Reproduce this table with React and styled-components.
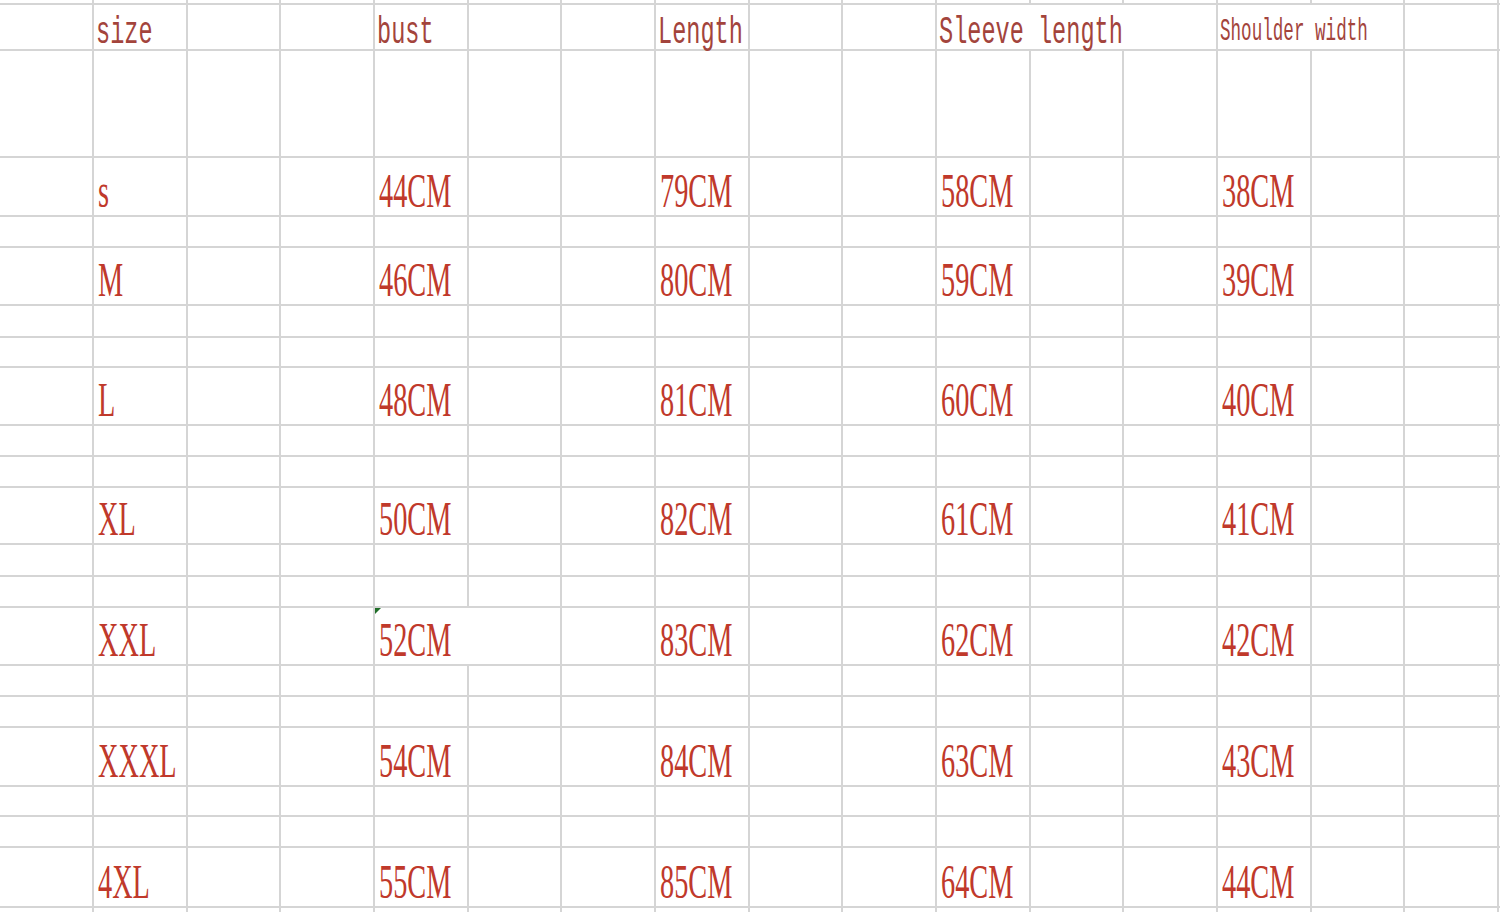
import React from 'react';
import styled, { createGlobalStyle } from 'styled-components';

const GlobalStyle = createGlobalStyle`
  html, body {
    margin: 0;
    padding: 0;
    background: #ffffff;
    overflow: hidden;
  }
`;

// column widths between the grid lines (lines are the 2px gaps)
const COLUMNS = '92px repeat(15, 91.67px) 1fr';
// row heights: a sliver on top, header, a tall empty row, then size rows with spacer rows
const ROW_HEIGHTS = [3, 44, 105, 57, 29, 56, 30, 28, 56, 29, 29, 55, 30, 29, 56, 29, 29, 57, 28, 29, 58, 4];
const COLS = 17;

const headers = { 1: 'size', 4: 'bust', 7: 'Length', 10: 'Sleeve length', 13: 'Shoulder width' };
const headerSpans = { 10: 3, 13: 2 };

const sizes = [
  ['s', '44CM', '79CM', '58CM', '38CM'],
  ['M', '46CM', '80CM', '59CM', '39CM'],
  ['L', '48CM', '81CM', '60CM', '40CM'],
  ['XL', '50CM', '82CM', '61CM', '41CM'],
  ['XXL', '52CM', '83CM', '62CM', '42CM'],
  ['XXXL', '54CM', '84CM', '63CM', '43CM'],
  ['4XL', '55CM', '85CM', '64CM', '44CM'],
];

// which grid row holds each size, and how many spacer rows follow it
const sizeRows = { 3: 0, 5: 1, 8: 2, 11: 3, 14: 4, 17: 5, 20: 6 };

const buildCells = (texts = {}, spans = {}) => {
  const cells = [];
  for (let c = 0; c < COLS; c++) {
    const span = spans[c] || 1;
    cells.push({ c, span, text: texts[c] });
    c += span - 1;
  }
  return cells;
};

const SizeChart = () => {
  const rows = ROW_HEIGHTS.map((_, r) => {
    if (r === 1) return { kind: 'header', cells: buildCells(headers, headerSpans) };
    if (sizeRows[r] !== undefined) {
      const [size, bust, length, sleeve, shoulder] = sizes[sizeRows[r]];
      const spans = size === 'XXL' ? { 4: 2 } : {};
      return {
        kind: 'data',
        flagged: size === 'XXL',
        cells: buildCells({ 1: size, 4: bust, 7: length, 10: sleeve, 13: shoulder }, spans),
      };
    }
    return { kind: 'empty', cells: buildCells() };
  });

  return (
    <Sheet>
      {rows.map((row, r) =>
        row.cells.map(({ c, span, text }) => {
          if (row.kind === 'header') {
            return (
              <HeaderCell key={`${r}-${c}`} $span={span}>
                {text && <HeaderText $small={c === 13}>{text}</HeaderText>}
              </HeaderCell>
            );
          }
          if (row.kind === 'data') {
            return (
              <DataCell key={`${r}-${c}`} $span={span}>
                {row.flagged && c === 4 && <ErrorMark />}
                {text && <Value>{text}</Value>}
              </DataCell>
            );
          }
          return <Cell key={`${r}-${c}`} />;
        })
      )}
    </Sheet>
  );
};

const App = () => (
  <>
    <GlobalStyle />
    <SizeChart />
  </>
);

export default App;

// Styled Components
const Sheet = styled.div`
  width: 1500px;
  height: 912px;
  display: grid;
  grid-template-columns: ${COLUMNS};
  grid-template-rows: ${ROW_HEIGHTS.map((h) => `${h}px`).join(' ')};
  gap: 2px;
  background: #d5d5d5;
  overflow: hidden;
`;

const Cell = styled.div`
  background: #ffffff;
  grid-column: span ${(p) => p.$span || 1};
  min-width: 0;
  position: relative;
`;

const HeaderCell = styled(Cell)`
  padding: 9px 0 0 2px;
  white-space: nowrap;
`;

const HeaderText = styled.span`
  display: inline-block;
  font-family: 'Liberation Mono', 'Courier New', monospace;
  font-size: ${(p) => (p.$small ? '32px' : '38px')};
  line-height: 1;
  color: #a3443c;
  transform: scaleX(${(p) => (p.$small ? 0.55 : 0.62)});
  transform-origin: left center;
  margin-top: ${(p) => (p.$small ? '2px' : '0')};
`;

const DataCell = styled(Cell)`
  display: flex;
  align-items: flex-end;
  padding-left: 4px;
  white-space: nowrap;
`;

const Value = styled.span`
  display: inline-block;
  font-family: 'Liberation Serif', 'Times New Roman', serif;
  font-size: 48px;
  line-height: 1;
  color: #c0392b;
  transform: scaleX(0.59);
  transform-origin: left bottom;
`;

const ErrorMark = styled.span`
  position: absolute;
  top: 0;
  left: 0;
  width: 0;
  height: 0;
  border-top: 6px solid #1f6e28;
  border-right: 6px solid transparent;
`;
